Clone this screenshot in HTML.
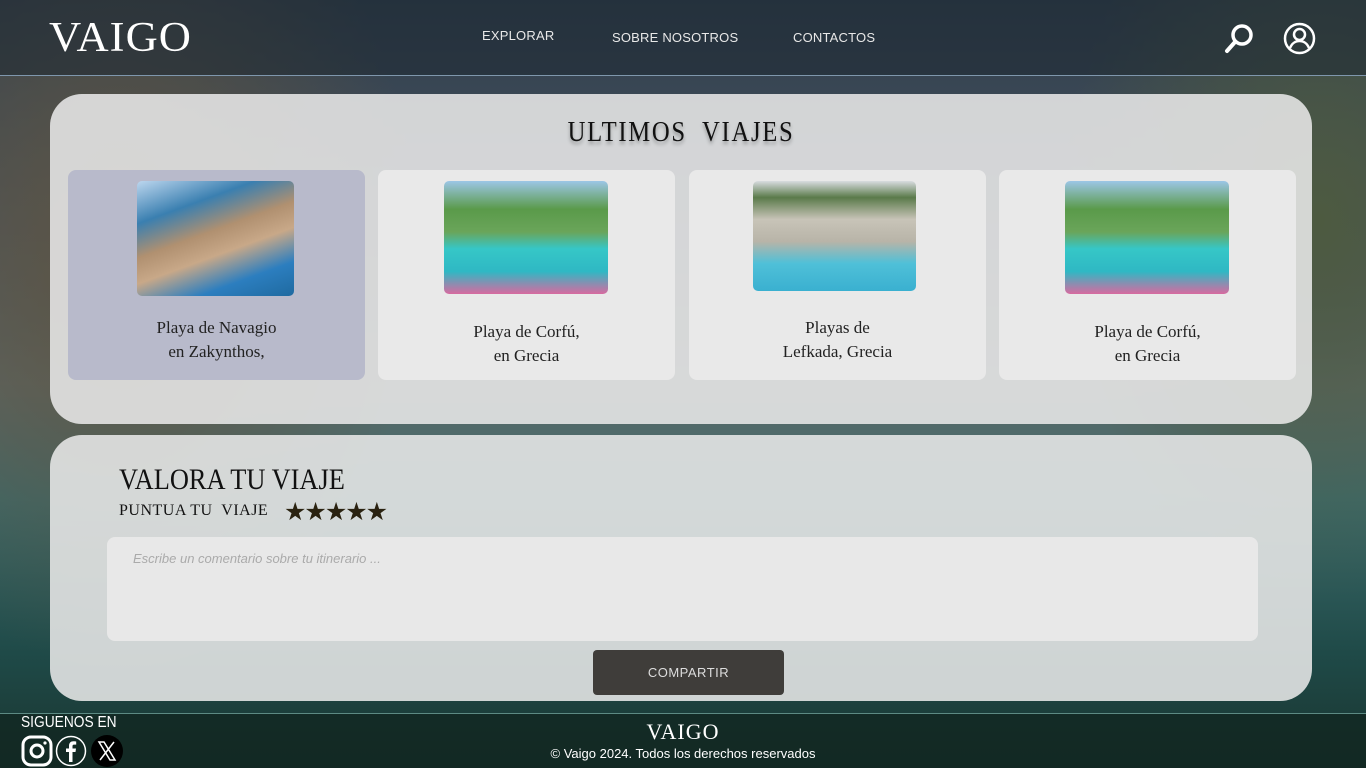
<!DOCTYPE html>
<html><head><meta charset="utf-8"><style>
*{margin:0;padding:0;box-sizing:border-box}
body{width:1366px;height:768px;overflow:hidden;position:relative;font-family:"Liberation Sans",sans-serif;
background:
radial-gradient(ellipse 300px 420px at 120px 250px,#5d5442 0%,rgba(80,75,60,0) 100%),
radial-gradient(ellipse 260px 380px at 1320px 220px,#4d5a40 0%,rgba(70,80,60,0) 100%),
linear-gradient(180deg,#2e3d4c 0%,#4a5560 30%,#5d6a6a 50%,#3d6a6a 65%,#1f4a48 85%,#1a3530 100%);}
.hdr{position:absolute;left:0;top:0;width:1366px;height:76px;background:rgba(30,40,50,0.55);border-bottom:1px solid #7f97ad}
.logo{position:absolute;left:49px;top:14px;font-family:"Liberation Serif",serif;font-size:42px;color:#fff;letter-spacing:1px;transform:scaleX(1.06);transform-origin:left}
.nav{position:absolute;top:29px;font-size:13px;color:#e8e8e8;letter-spacing:0.2px}
.panel{position:absolute;left:50px;width:1262px;background:rgba(232,232,232,0.88);border-radius:32px}
.card{position:absolute;top:76px;width:297px;height:210px;background:#e9e9e9;border-radius:8px;text-align:center;font-family:"Liberation Serif",serif;font-size:17px;color:#222;line-height:24px}
.card .img{position:absolute;border-radius:5px}
.card p{position:absolute;left:0;width:100%}
.sea{background:linear-gradient(180deg,#9cc6e6 0%,#5a9a4a 25%,#6aa55a 45%,#36c7c7 60%,#2fb8c4 80%,#d86aa0 100%)}
.ft{position:absolute;left:0;top:713px;width:1366px;height:55px;background:rgba(15,35,30,0.7);border-top:1px solid #5d8b84}
</style></head><body>
<div class="hdr">
<div class="logo">VAIGO</div>
<div class="nav" style="left:482px;top:28px">EXPLORAR</div>
<div class="nav" style="left:612px;top:30px">SOBRE NOSOTROS</div>
<div class="nav" style="left:793px;top:30px">CONTACTOS</div>
<svg style="position:absolute;left:1224px;top:23px" width="32" height="32" viewBox="0 0 32 32"><circle cx="18" cy="12" r="9" fill="none" stroke="#fff" stroke-width="3.5"/><line x1="11" y1="19" x2="3" y2="28" stroke="#fff" stroke-width="4" stroke-linecap="round"/></svg>
<svg style="position:absolute;left:1283px;top:22px" width="33" height="33" viewBox="0 0 33 33"><circle cx="16.5" cy="16.5" r="14.5" fill="none" stroke="#fff" stroke-width="2.5"/><circle cx="16.5" cy="12.5" r="5.5" fill="none" stroke="#fff" stroke-width="2.5"/><path d="M7 26c2-5 6-7 9.5-7s7.5 2 9.5 7" fill="none" stroke="#fff" stroke-width="2.5"/></svg>
</div>

<div class="panel" style="top:94px;height:330px">
<div style="position:absolute;left:0;width:100%;top:22px;text-align:center;font-family:'Liberation Serif',serif;font-size:29px;letter-spacing:2px;color:#111;text-shadow:0 3px 4px rgba(0,0,0,0.3);transform:scaleX(0.85)">ULTIMOS&nbsp; VIAJES</div>
<div class="card" style="left:18px;background:#b8bacb"><div class="img" style="left:69px;top:11px;width:157px;height:115px;background:linear-gradient(160deg,#bcd6ee 0%,#3a7fb0 25%,#b09070 45%,#c8a888 60%,#2c7ebf 80%,#1f6aa0 100%)"></div><p style="top:146px">Playa de Navagio<br>en Zakynthos,</p></div>
<div class="card" style="left:328px"><div class="img sea" style="left:66px;top:11px;width:164px;height:113px"></div><p style="top:150px">Playa de Corfú,<br>en Grecia</p></div>
<div class="card" style="left:639px"><div class="img" style="left:64px;top:11px;width:163px;height:110px;background:linear-gradient(180deg,#d8dce0 0%,#5a7a4a 15%,#c8c4b8 35%,#b8b4a8 55%,#4fc0d8 75%,#3ab0d0 100%)"></div><p style="top:146px">Playas de<br>Lefkada, Grecia</p></div>
<div class="card" style="left:949px"><div class="img sea" style="left:66px;top:11px;width:164px;height:113px"></div><p style="top:150px">Playa de Corfú,<br>en Grecia</p></div>
</div>

<div class="panel" style="top:435px;height:266px">
<div style="position:absolute;left:69px;top:28px;font-family:'Liberation Serif',serif;font-size:30px;color:#111;transform:scaleX(0.88);transform-origin:left">VALORA TU VIAJE</div>
<div style="position:absolute;left:69px;top:67px;font-family:'Liberation Serif',serif;font-size:16px;color:#111;letter-spacing:0.5px">PUNTUA TU&nbsp; VIAJE</div>
<div style="position:absolute;left:234px;top:62px;font-size:25px;color:#2a2210;letter-spacing:-2px">★★★★★</div>
<div style="position:absolute;left:57px;top:102px;width:1151px;height:104px;background:#e8e8e8;border-radius:8px"><span style="position:absolute;left:26px;top:14px;font-size:13px;color:#aaa;font-style:italic">Escribe un comentario sobre tu itinerario ...</span></div>
<div style="position:absolute;left:543px;top:215px;width:191px;height:45px;background:#3f3d3a;border-radius:4px;color:#ddd;font-size:13px;text-align:center;line-height:45px;letter-spacing:0.5px">COMPARTIR</div>
</div>

<div class="ft">
<div style="position:absolute;left:21px;top:0px;color:#fff;font-size:16px;transform:scaleX(0.86);transform-origin:left">SIGUENOS EN</div>
<svg style="position:absolute;left:21px;top:21px" width="32" height="32" viewBox="0 0 32 32"><rect x="2" y="2" width="28" height="28" rx="8" fill="none" stroke="#fff" stroke-width="3"/><circle cx="16" cy="16" r="6" fill="none" stroke="#fff" stroke-width="3"/><circle cx="24" cy="8" r="1.6" fill="#fff"/></svg>
<svg style="position:absolute;left:55px;top:21px" width="32" height="32" viewBox="0 0 32 32"><circle cx="16" cy="16" r="14.5" fill="none" stroke="#fff" stroke-width="1.5"/><path d="M17.5 27V17h3l.5-3.5h-3.5v-2.2c0-1 .3-1.7 1.8-1.7h1.9V6.5c-.4 0-1.5-.2-2.7-.2-2.7 0-4.5 1.6-4.5 4.6v2.6h-3V17h3v10z" fill="#fff"/></svg>
<svg style="position:absolute;left:91px;top:21px" width="32" height="32" viewBox="0 0 32 32"><circle cx="16" cy="16" r="16" fill="#000"/><path d="M8 7h5l11 18h-5zM23 7l-14 18" fill="none" stroke="#fff" stroke-width="1.5"/></svg>
<div style="position:absolute;left:0;width:1366px;top:5px;text-align:center;font-family:'Liberation Serif',serif;font-size:22px;color:#fff;letter-spacing:1px">VAIGO</div>
<div style="position:absolute;left:0;width:1366px;top:32px;text-align:center;font-size:13px;color:#fff">© Vaigo 2024. Todos los derechos reservados</div>
</div>
</body></html>
